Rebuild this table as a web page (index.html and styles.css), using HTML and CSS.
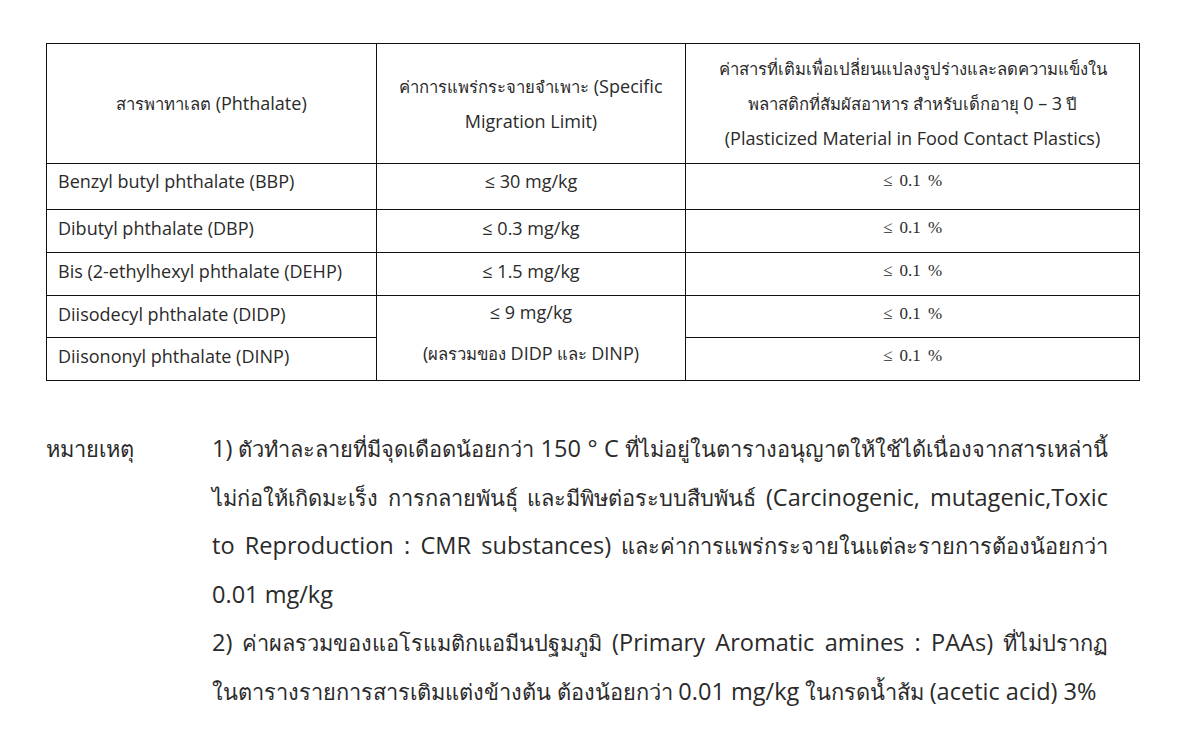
FILE: index.html
```html
<!DOCTYPE html>
<html lang="th">
<head>
<meta charset="utf-8">
<title>Phthalate</title>
<link rel="stylesheet" href="styles.css">
</head>
<body>
<table class="limits">
  <colgroup>
    <col class="c1"><col class="c2"><col class="c3">
  </colgroup>
  <thead>
    <tr class="head">
      <th>สารพาทาเลต <span class="en" lang="en">(Phthalate)</span></th>
      <th>ค่าการแพร่กระจายจำเพาะ <span class="en" lang="en">(Specific<br>Migration Limit)</span></th>
      <th>ค่าสารที่เติมเพื่อเปลี่ยนแปลงรูปร่างและลดความแข็งใน<br>พลาสติกที่สัมผัสอาหาร สำหรับเด็กอายุ <span class="en" lang="en">0 – 3</span> ปี<br><span class="en" lang="en">(Plasticized Material in Food Contact Plastics)</span></th>
    </tr>
  </thead>
  <tbody>
    <tr class="r1">
      <td class="name en" lang="en">Benzyl butyl phthalate (BBP)</td>
      <td class="mid en" lang="en">≤ 30 mg/kg</td>
      <td class="pct">≤ 0.1 %</td>
    </tr>
    <tr class="r2">
      <td class="name en" lang="en">Dibutyl phthalate (DBP)</td>
      <td class="mid en" lang="en">≤ 0.3 mg/kg</td>
      <td class="pct">≤ 0.1 %</td>
    </tr>
    <tr class="r3">
      <td class="name en" lang="en">Bis (2-ethylhexyl phthalate (DEHP)</td>
      <td class="mid en" lang="en">≤ 1.5 mg/kg</td>
      <td class="pct">≤ 0.1 %</td>
    </tr>
    <tr class="r4">
      <td class="name en" lang="en">Diisodecyl phthalate (DIDP)</td>
      <td class="mid merged" rowspan="2"><div class="l1 en" lang="en">≤ 9 mg/kg</div><div class="l2"><span class="en">(</span>ผลรวมของ <span class="en" lang="en">DIDP</span> และ <span class="en" lang="en">DINP)</span></div></td>
      <td class="pct">≤ 0.1 %</td>
    </tr>
    <tr class="r5">
      <td class="name en" lang="en">Diisononyl phthalate (DINP)</td>
      <td class="pct">≤ 0.1 %</td>
    </tr>
  </tbody>
</table>

<section class="notes">
  <div class="label">หมายเหตุ</div>
  <div class="body">
    <p>
      <span class="ln full"><span class="en">1)</span> ตัวทำละลายที่มีจุดเดือดน้อยกว่า <span class="en" lang="en">150 ° C</span> ที่ไม่อยู่ในตารางอนุญาตให้ใช้ได้เนื่องจากสารเหล่านี้</span>
      <span class="ln full">ไม่ก่อให้เกิดมะเร็ง การกลายพันธุ์ และมีพิษต่อระบบสืบพันธ์ <span class="en" lang="en">(Carcinogenic, mutagenic,Toxic</span></span>
      <span class="ln full"><span class="en" lang="en">to Reproduction : CMR substances)</span> และค่าการแพร่กระจายในแต่ละรายการต้องน้อยกว่า</span>
      <span class="ln"><span class="en" lang="en">0.01 mg/kg</span></span>
    </p>
    <p>
      <span class="ln full"><span class="en">2)</span> ค่าผลรวมของแอโรแมติกแอมีนปฐมภูมิ <span class="en" lang="en">(Primary Aromatic amines : PAAs)</span> ที่ไม่ปรากฏ</span>
      <span class="ln">ในตารางรายการสารเติมแต่งข้างต้น ต้องน้อยกว่า <span class="en" lang="en">0.01 mg/kg</span> ในกรดน้ำส้ม <span class="en" lang="en">(acetic acid) 3%</span></span>
    </p>
  </div>
</section>
</body>
</html>
```

FILE: styles.css
```css
html, body {
  margin: 0;
  background: #ffffff;
}
body {
  padding: 43px 0 0 46px;
  font-family: "Open Sans", "Noto Sans", sans-serif;
  color: #2a2a2a;
}
.en {
  font-size: 1.08em;
}
.limits {
  border-collapse: collapse;
  width: 1093px;
  table-layout: fixed;
  font-size: 16.7px;
}
.c1 { width: 330px; }
.c2 { width: 309px; }
.c3 { width: 454px; }
.limits th, .limits td {
  border: 1.5px solid #111;
  padding: 0 11px;
  font-weight: normal;
  vertical-align: middle;
  white-space: nowrap;
}
.head { height: 120px; }
.head th {
  line-height: 35px;
  text-align: center;
}
.head th .en {
  line-height: 20px;
}
.limits td {
  line-height: 24px;
  padding-bottom: 6px;
}
.limits .r1 td { padding-bottom: 11px; }
.r1 { height: 46px; }
.r2 { height: 43px; }
.r3 { height: 43px; }
.r4 { height: 42px; }
.r5 { height: 43px; }
.limits td.mid { text-align: center; }
.limits td.pct {
  text-align: center;
  font-family: "Liberation Serif", serif;
  font-size: 17px;
  word-spacing: 3px;
}
.limits td.merged {
  vertical-align: top;
  padding-top: 0;
  padding-bottom: 0;
  line-height: 33px;
}
.merged .l2 { margin-top: 8px; }
.merged .l2 .en { line-height: 20px; }

.notes {
  display: grid;
  grid-template-columns: 166px 896px;
  margin-top: 44px;
  font-size: 21.8px;
  line-height: 48.6px;
}
.notes .en {
  line-height: 20px;
}
.notes p {
  margin: 0;
}
.notes .ln {
  display: block;
  white-space: nowrap;
}
.notes .ln.full {
  text-align: justify;
  text-align-last: justify;
}
```
